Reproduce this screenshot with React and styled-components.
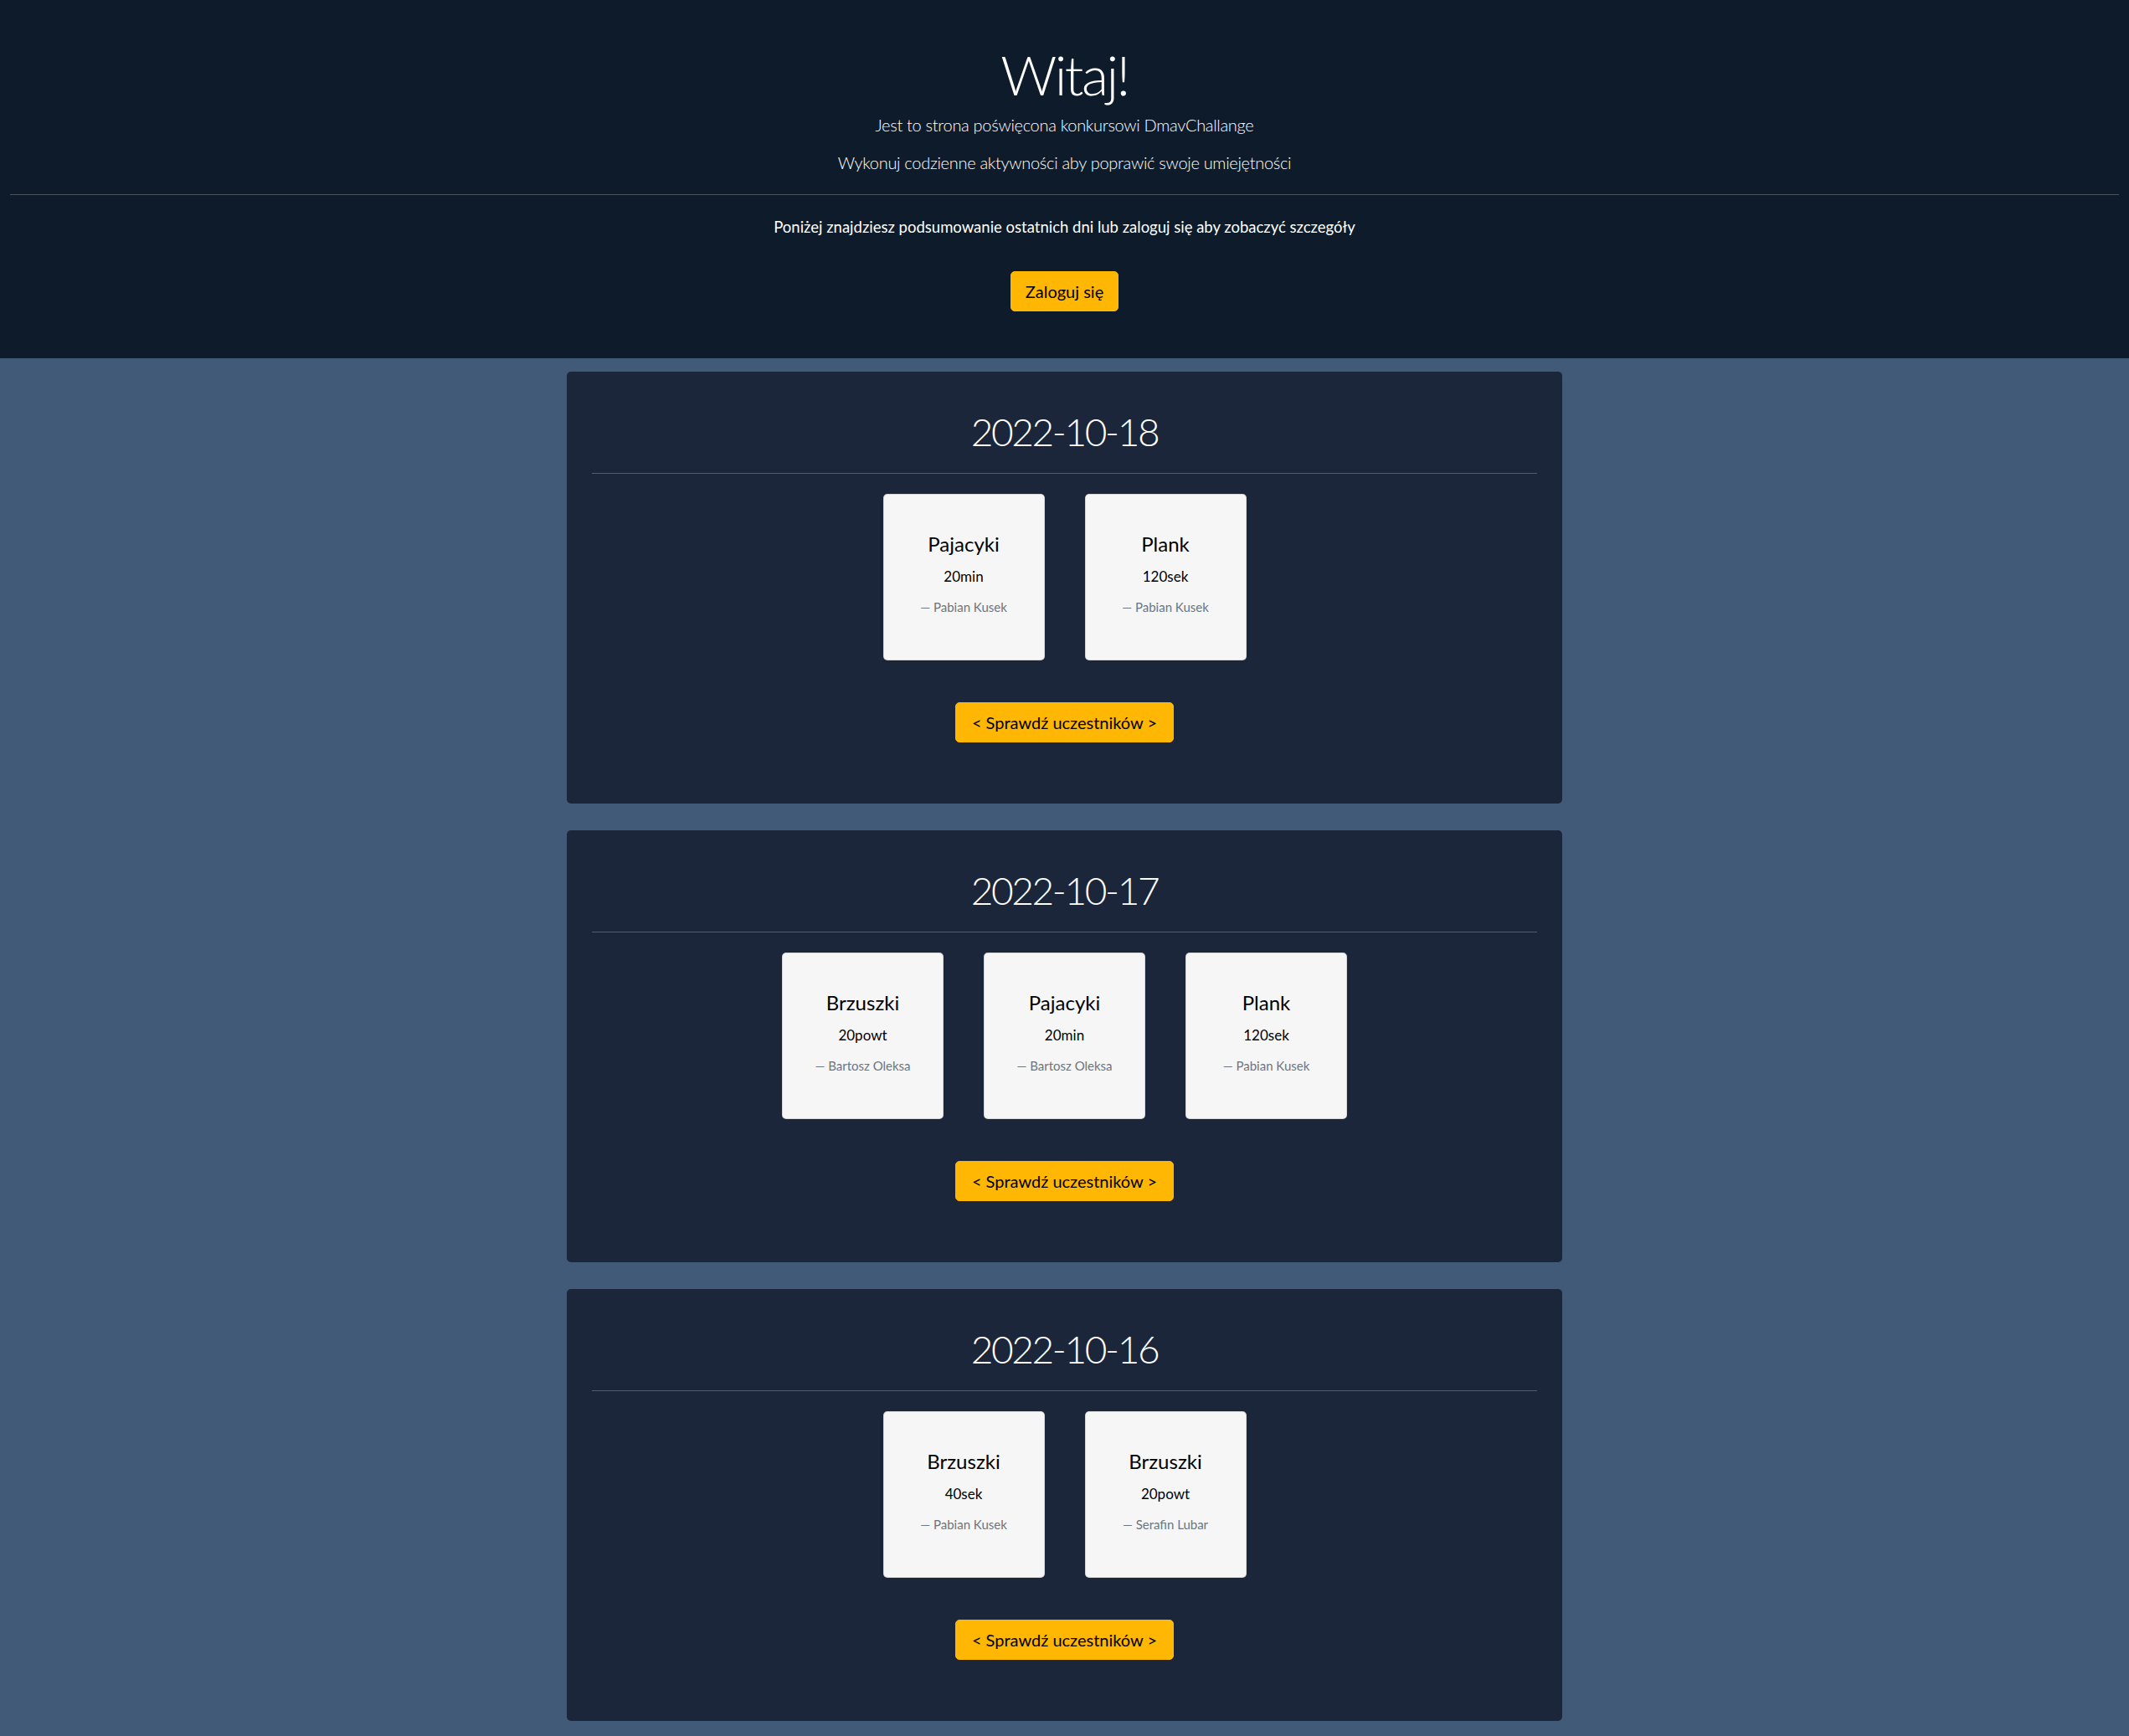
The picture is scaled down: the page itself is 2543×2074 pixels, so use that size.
import React from 'react'
import styled, { createGlobalStyle } from 'styled-components'

const GlobalStyle = createGlobalStyle`
  html, body {
    margin: 0;
    padding: 0;
    background-color: #415a77;
  }

  body {
    font-family: Lato, 'Noto Sans', sans-serif;
    color: #000;
  }

  * {
    box-sizing: border-box;
  }
`

const days = [
  {
    date: '2022-10-18',
    tasks: [
      { name: 'Pajacyki', amount: '20min', author: 'Pabian Kusek' },
      { name: 'Plank', amount: '120sek', author: 'Pabian Kusek' },
    ],
  },
  {
    date: '2022-10-17',
    tasks: [
      { name: 'Brzuszki', amount: '20powt', author: 'Bartosz Oleksa' },
      { name: 'Pajacyki', amount: '20min', author: 'Bartosz Oleksa' },
      { name: 'Plank', amount: '120sek', author: 'Pabian Kusek' },
    ],
  },
  {
    date: '2022-10-16',
    tasks: [
      { name: 'Brzuszki', amount: '40sek', author: 'Pabian Kusek' },
      { name: 'Brzuszki', amount: '20powt', author: 'Serafin Lubar' },
    ],
  },
]

const Header = styled.header`
  background-color: #0d1b2a;
  color: #fff;
  text-align: center;
  padding: 49px 12px 56px;
`

const Title = styled.h1`
  margin: 0 0 6px;
  font-size: 66px;
  font-weight: 300;
  line-height: 1.2;
  letter-spacing: -2.5px;
`

const Lead = styled.p`
  margin: 0 0 15px;
  font-size: 20px;
  font-weight: 300;
  line-height: 1.5;
  letter-spacing: -0.3px;
`

const Divider = styled.hr`
  margin: ${(p) => p.$top}px 0 ${(p) => p.$bottom}px;
  border: 0;
  border-top: 1px solid rgba(255, 255, 255, 0.25);
`

const Info = styled.p`
  margin: 0 0 38px;
  font-size: 18.5px;
  font-weight: 400;
  line-height: 30px;
`

const YellowButton = styled.button`
  display: inline-block;
  padding: 8px ${(p) => p.$pad || 18}px;
  font-family: inherit;
  font-size: 20px;
  line-height: 30px;
  color: #000;
  background-color: #ffb703;
  border: 1px solid #ffb703;
  border-radius: 5px;
  cursor: pointer;
`

const Days = styled.main`
  display: flex;
  flex-direction: column;
  align-items: center;
  gap: 32px;
  padding: 16px 0;
`

const DayCard = styled.section`
  width: 1189px;
  height: 516px;
  padding: 44px 30px 0;
  background-color: #1b263b;
  border-radius: 5px;
  text-align: center;
  color: #fff;
`

const DayTitle = styled.h2`
  margin: 0 0 22px;
  font-size: 46px;
  font-weight: 300;
  line-height: 1.2;
  letter-spacing: -2.4px;
`

const TaskRow = styled.div`
  display: flex;
  justify-content: center;
  gap: 48px;
  margin: 24px 0 50px;
`

const Task = styled.div`
  width: 193px;
  height: 199px;
  padding: 45px 12px 0;
  background-color: #f6f6f6;
  border: 1px solid rgba(0, 0, 0, 0.125);
  border-radius: 5px;
  color: #000;
  text-align: center;
`

const TaskName = styled.h5`
  margin: 0 0 11px;
  font-size: 24px;
  font-weight: 400;
  line-height: 1.2;
`

const TaskAmount = styled.p`
  margin: 0 0 12px;
  font-size: 17px;
  line-height: 1.5;
`

const TaskAuthor = styled.p`
  margin: 0;
  font-size: 15px;
  font-weight: 400;
  line-height: 1.5;
  color: #6c757d;
`

const Day = ({ date, tasks }) => (
  <DayCard>
    <DayTitle>{date}</DayTitle>
    <Divider $top={0} $bottom={0} />
    <TaskRow>
      {tasks.map((task, i) => (
        <Task key={i}>
          <TaskName>{task.name}</TaskName>
          <TaskAmount>{task.amount}</TaskAmount>
          <TaskAuthor>— {task.author}</TaskAuthor>
        </Task>
      ))}
    </TaskRow>
    <YellowButton $pad={19}>&lt; Sprawdź uczestników &gt;</YellowButton>
  </DayCard>
)

export default function App() {
  return (
    <>
      <GlobalStyle />
      <Header>
        <Title>Witaj!</Title>
        <Lead>Jest to strona poświęcona konkursowi DmavChallange</Lead>
        <Lead>Wykonuj codzienne aktywności aby poprawić swoje umiejętności</Lead>
        <Divider $top={23} $bottom={23} />
        <Info>
          Poniżej znajdziesz podsumowanie ostatnich dni lub zaloguj się aby zobaczyć szczegóły
        </Info>
        <YellowButton $pad={17}>Zaloguj się</YellowButton>
      </Header>
      <Days>
        {days.map((day) => (
          <Day key={day.date} {...day} />
        ))}
      </Days>
    </>
  )
}
